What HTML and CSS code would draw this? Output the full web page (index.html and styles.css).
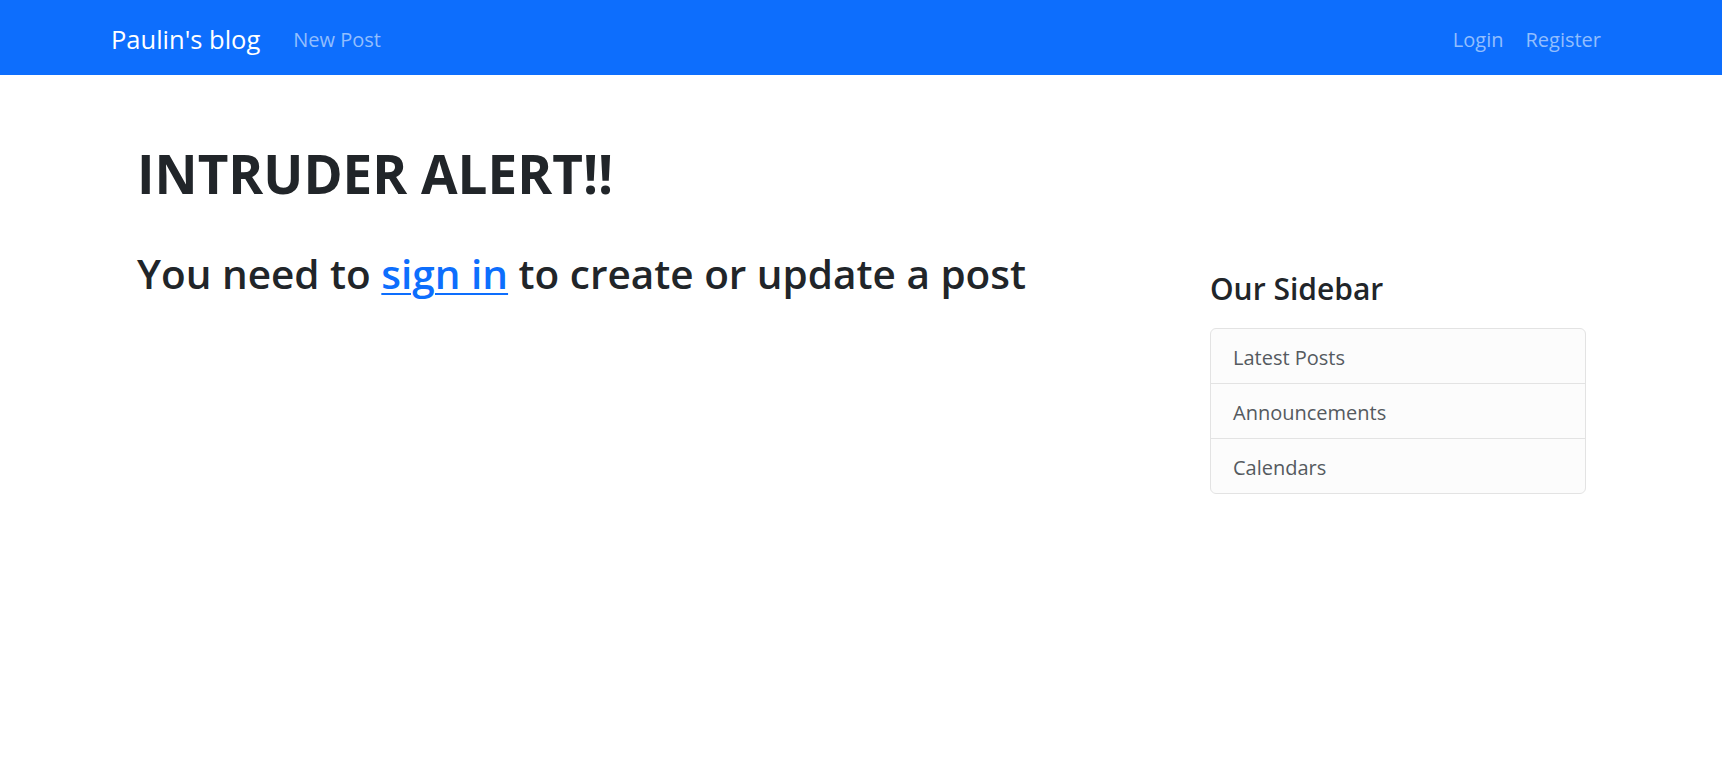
FILE: index.html
```html
<!DOCTYPE html>
<html lang="en">
<head>
<meta charset="utf-8">
<title>Paulin's blog</title>
<link rel="stylesheet" href="styles.css">
</head>
<body>
<nav class="navbar">
  <div class="nav-inner">
    <div class="nav-left">
      <a class="brand" href="#">Paulin's blog</a>
      <a class="nav-link" href="#">New Post</a>
    </div>
    <div class="nav-right">
      <a class="nav-link" href="#">Login</a>
      <a class="nav-link" href="#">Register</a>
    </div>
  </div>
</nav>
<main class="page">
  <h1 class="alert-title">INTRUDER ALERT!!</h1>
  <div class="row">
    <div class="content">
      <h2 class="notice">You need to <a href="#" class="signin">sign in</a> to create or update a post</h2>
    </div>
    <aside class="sidebar">
      <h3 class="sidebar-title">Our Sidebar</h3>
      <ul class="list-group">
        <li class="list-item">Latest Posts</li>
        <li class="list-item">Announcements</li>
        <li class="list-item">Calendars</li>
      </ul>
    </aside>
  </div>
</main>
</body>
</html>
```
FILE: styles.css
```css
* { box-sizing: border-box; }
body {
  margin: 0;
  font-family: "Open Sans", "Noto Sans", sans-serif;
  color: #212529;
  background: #fff;
}
a { text-decoration: none; }
.navbar {
  background: #0d6efd;
  height: 75px;
}
.nav-inner {
  height: 100%;
  display: flex;
  align-items: center;
  justify-content: space-between;
  padding: 2px 121px 0 111px;
}
.nav-left, .nav-right {
  display: flex;
  align-items: center;
}
.brand {
  color: #fff;
  font-size: 25.5px;
  line-height: 32px;
  margin-right: 33px;
}
.nav-link {
  color: #92befe;
  font-size: 20px;
  line-height: 28px;
  padding-top: 3px;
}
.nav-right .nav-link + .nav-link { margin-left: 22px; }
.page {
  padding: 67px 136px 0 137px;
}
.alert-title {
  margin: 0;
  font-size: 53px;
  line-height: 64px;
  font-weight: 700;
}
.row {
  display: flex;
  margin-top: 44px;
}
.content { flex: 1; }
.notice {
  margin: 0;
  font-size: 40.5px;
  line-height: 48px;
  font-weight: 600;
}
.signin {
  color: #0d6efd;
  text-decoration: underline;
  text-decoration-thickness: 2px;
  text-underline-offset: 4px;
}
.sidebar {
  width: 376px;
  padding-top: 21px;
}
.sidebar-title {
  margin: 0 0 21px;
  font-size: 30px;
  line-height: 36px;
  font-weight: 600;
}
.list-group {
  list-style: none;
  margin: 0;
  padding: 0;
  border: 1px solid #e3e3e3;
  border-radius: 6px;
  background: #fcfcfc;
}
.list-item {
  padding: 15px 22px 11px;
  font-size: 20px;
  line-height: 28px;
  color: #555a5f;
}
.list-item + .list-item { border-top: 1px solid #e3e3e3; }
```
